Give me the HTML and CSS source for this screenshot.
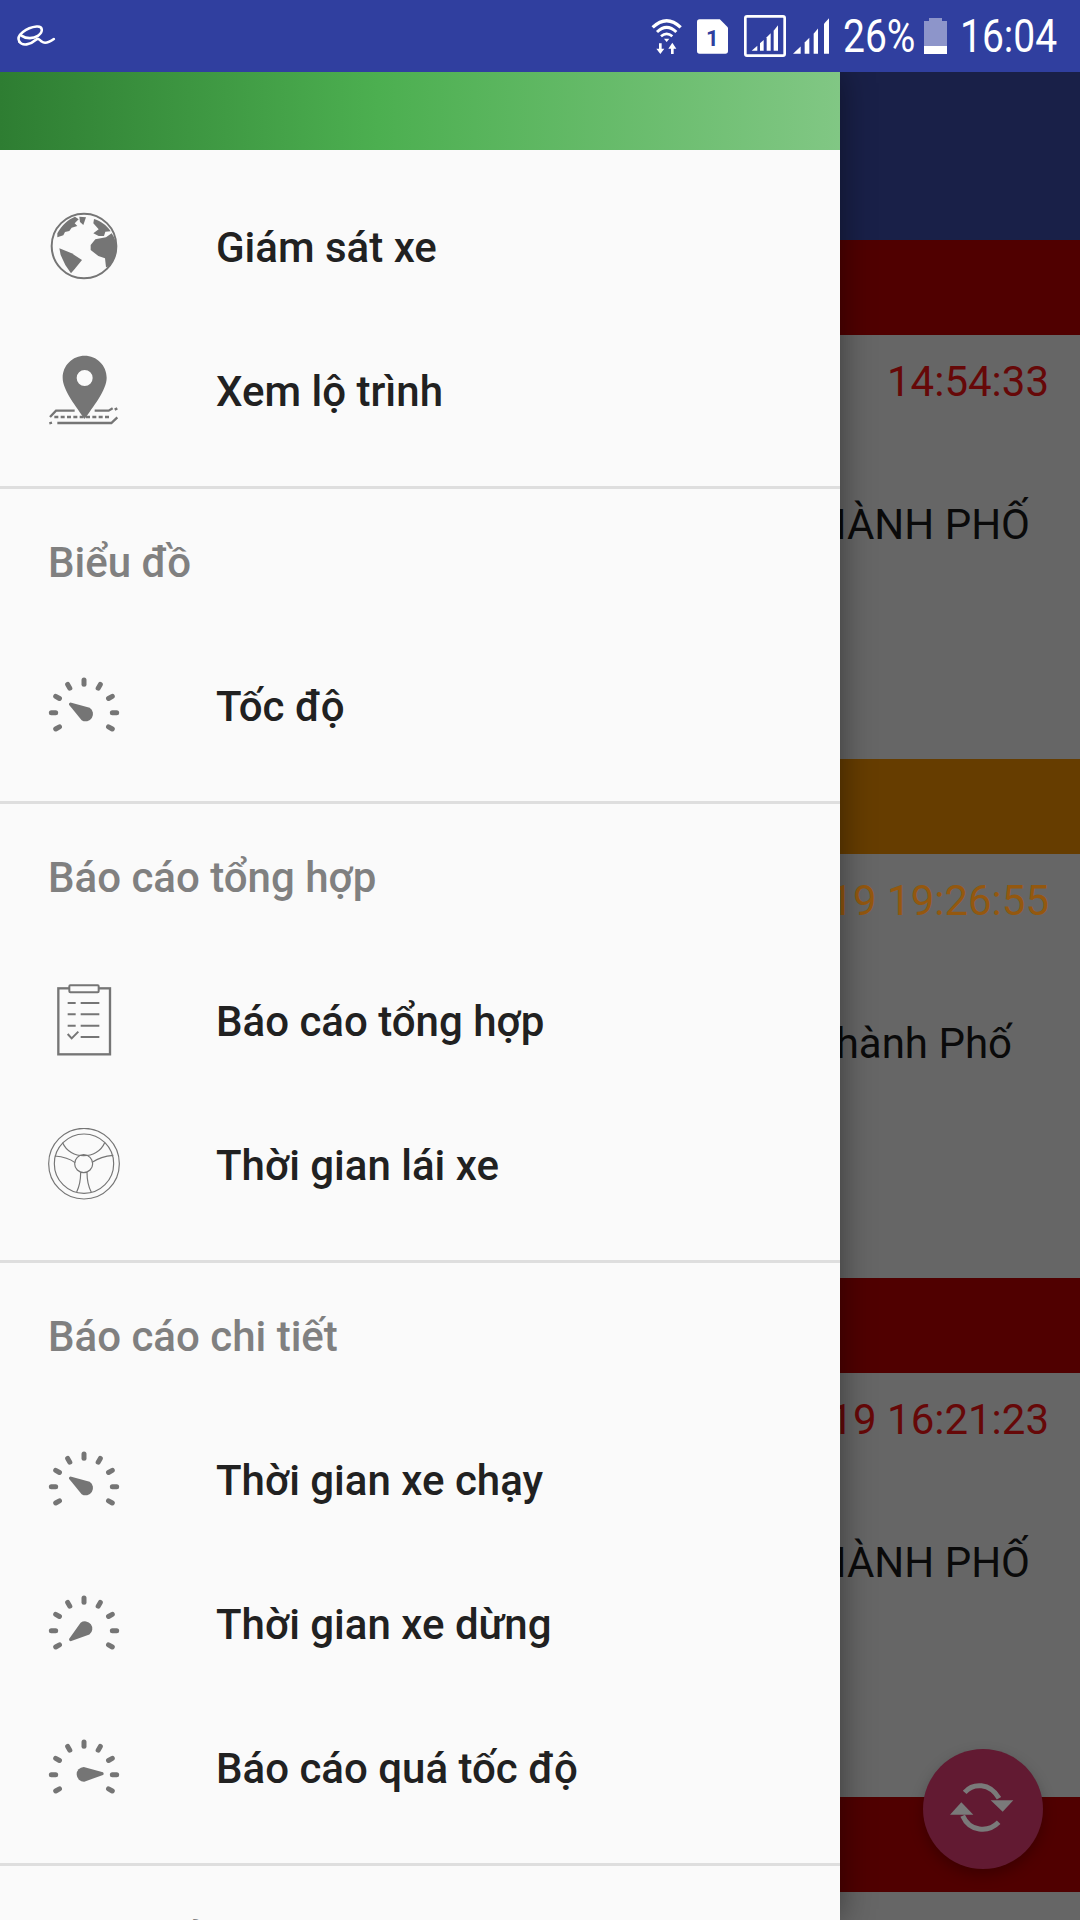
FILE: index.html
```html
<!DOCTYPE html>
<html lang="vi">
<head>
  <meta charset="UTF-8">
  <meta name="viewport" content="width=device-width, initial-scale=1">
  <title>Menu</title>
  <link rel="stylesheet" href="styles.css">
</head>
<body>
<svg class="sprite" aria-hidden="true">
  <defs>
    <g id="gauge-ticks">
      <line x1="0" y1="-85" x2="0" y2="-98"/>
      <line x1="0" y1="-85" x2="0" y2="-98" transform="rotate(30)"/>
      <line x1="0" y1="-85" x2="0" y2="-98" transform="rotate(60)"/>
      <line x1="0" y1="-85" x2="0" y2="-98" transform="rotate(90)"/>
      <line x1="0" y1="-85" x2="0" y2="-98" transform="rotate(120)"/>
      <line x1="0" y1="-85" x2="0" y2="-98" transform="rotate(-30)"/>
      <line x1="0" y1="-85" x2="0" y2="-98" transform="rotate(-60)"/>
      <line x1="0" y1="-85" x2="0" y2="-98" transform="rotate(-90)"/>
      <line x1="0" y1="-85" x2="0" y2="-98" transform="rotate(-120)"/>
    </g>
    <path id="gauge-needle" d="M0-22 L57-4 Q61 0 57 4 L0 22 A22 22 0 0 1 0-22Z"/>
  </defs>
</svg>

<div class="app">
  <div class="statusbar">
    <svg class="st-logo" viewBox="24 25 131 75">
      <path d="M42 80C30 60 66 36 96 33C116 31 118 50 100 62C86 71 64 72 50 62"/>
      <path d="M42 80C52 95 76 90 94 74C100 69 104 72 112 80C122 88 136 82 150 72"/>
    </svg>
    <div class="st-right">
      <svg class="st-wifi" viewBox="36 52 96 108">
        <path class="st-line" d="M41 80Q83 40 125 80" stroke-width="10"/>
        <path class="st-line" d="M54 94Q83 66 112 94" stroke-width="9"/>
        <path class="st-line" d="M66 107Q83 92 100 107" stroke-width="8"/>
        <path d="M75 114H91L83 124Z"/>
        <path d="M60 128H68V144H76L64 160L52 144H60Z"/>
        <path d="M96 160H104V144H112L100 126L88 144H96Z"/>
      </svg>
      <svg class="st-sim" viewBox="170 55 95 105">
        <path d="M178 55H240L265 80V152Q265 160 257 160H178Q170 160 170 152V63Q170 55 178 55Z"/>
        <text x="217" y="137" text-anchor="middle">1</text>
      </svg>
      <svg class="st-frame" viewBox="312 45 126 126">
        <rect class="st-line" x="316" y="49" width="118" height="118" rx="5" stroke-width="8"/>
        <path d="M335 152L352 137V152Z"/>
        <path d="M360 130L371 120V152H360Z"/>
        <path d="M380 112L392 100V152H380Z"/>
        <path d="M401 92L414 76V152H401Z"/>
      </svg>
      <svg class="st-signal" viewBox="460 55 108 107">
        <path d="M460 162L483 140V162Z"/>
        <path d="M495 128L509 114V162H495Z"/>
        <path d="M522 102L535 86V162H522Z"/>
        <path d="M553 72L568 55V162H553Z"/>
      </svg>
      <span class="st-text st-pct">26%</span>
      <div class="st-battery">
        <div class="st-battery-level"></div>
      </div>
      <span class="st-text st-time">16:04</span>
    </div>
  </div>

  <div class="screen">
    <div class="behind">
      <div class="toolbar"></div>

      <div class="band band-red"></div>
      <div class="card-body">
        <div class="card-date date-red">14:54:33</div>
        <div class="card-addr">THÀNH PHỐ</div>
      </div>

      <div class="band band-orange"></div>
      <div class="card-body">
        <div class="card-date date-orange">2019 19:26:55</div>
        <div class="card-addr card-addr-short">Thành Phố</div>
      </div>

      <div class="band band-red"></div>
      <div class="card-body">
        <div class="card-date date-red">2019 16:21:23</div>
        <div class="card-addr">THÀNH PHỐ</div>
      </div>

      <div class="band band-red"></div>
      <div class="card-body"></div>
    </div>

    <div class="fab">
      <svg class="fab-icon" viewBox="0 0 330 360">
        <path class="fab-arc" d="M110 130C135 102 185 100 213 148"/>
        <path d="M188 154H256L224 188Z"/>
        <path class="fab-arc" d="M212 220C180 252 125 248 104 200"/>
        <path d="M66 197H136L100 160Z"/>
      </svg>
    </div>

    <nav class="drawer">
      <div class="drawer-head"></div>

      <div class="group group-first">
        <div class="item">
          <svg class="icon" viewBox="144 60 216 216">
            <circle class="icon-line" cx="252" cy="168" r="97" stroke-width="6"/>
            <path d="M172 130C185 105 205 88 225 80L236 88L224 100L232 108L215 113L208 123L195 126L190 136L172 142Z"/>
            <path d="M238 80L258 82L250 105L240 96Z"/>
            <path d="M282 87C300 92 320 105 332 124L316 125L312 138L296 138L280 130L296 118L280 100Z"/>
            <path d="M286 148L318 142L335 130C350 150 352 175 348 195L330 228L318 232L315 205L295 198L272 180L272 165Z"/>
            <path d="M178 175L215 190L246 210L226 235L213 250L196 225L182 195Z"/>
          </svg>
          <span>Giám sát xe</span>
        </div>
        <div class="item">
          <svg class="icon" viewBox="146 491 216 216">
            <path fill-rule="evenodd" d="M256 496C292 496 322 525 322 562C322 600 280 650 256 686C232 650 190 600 190 562C190 525 220 496 256 496ZM256 539A24 24 0 1 0 256 587A24 24 0 1 0 256 539Z"/>
            <path class="icon-line" stroke-width="7" d="M152 680L170 661H226M286 661H328L340 654"/>
            <path class="icon-line" stroke-width="7" stroke-dasharray="12 7" d="M165 680H330"/>
            <path class="icon-line" stroke-width="7" d="M174 698H336L354 681"/>
            <path class="icon-line" stroke-width="7" d="M150 699L158 697M346 658L354 654"/>
          </svg>
          <span>Xem lộ trình</span>
        </div>
      </div>

      <div class="group">
        <div class="group-title">Biểu đồ</div>
        <div class="item">
          <svg class="icon" viewBox="-108 -131 216 216">
            <use class="gauge-ticks" href="#gauge-ticks"/>
            <use href="#gauge-needle" transform="translate(5 4) rotate(213)"/>
          </svg>
          <span>Tốc độ</span>
        </div>
      </div>

      <div class="group">
        <div class="group-title">Báo cáo tổng hợp</div>
        <div class="item">
          <svg class="icon" viewBox="84 72 216 216">
            <rect class="icon-line" x="115" y="85" width="155" height="198" stroke-width="7"/>
            <rect class="clip" x="148" y="76" width="88" height="21" rx="3" stroke-width="6"/>
            <path class="icon-line" stroke-width="6" d="M143 129H167M182 129H238M143 163H167M182 163H238M143 197H167M182 197H238M182 231H238"/>
            <path class="icon-line" stroke-width="6" d="M143 222L155 235L175 215"/>
          </svg>
          <span>Báo cáo tổng hợp</span>
        </div>
        <div class="item">
          <svg class="icon" viewBox="84 504 216 216">
            <g class="icon-line" stroke-width="3.5">
              <circle cx="192" cy="611" r="106"/>
              <circle cx="192" cy="611" r="89"/>
              <circle cx="191" cy="611" r="27"/>
              <path d="M128 548C150 600 232 600 254 548"/>
              <path d="M104 588C130 590 150 596 165 608"/>
              <path d="M218 606C235 594 258 588 280 586"/>
              <path d="M182 637C182 660 178 680 170 696"/>
              <path d="M201 637C201 660 205 680 214 697"/>
            </g>
          </svg>
          <span>Thời gian lái xe</span>
        </div>
      </div>

      <div class="group">
        <div class="group-title">Báo cáo chi tiết</div>
        <div class="item">
          <svg class="icon" viewBox="-108 -131 216 216">
            <use class="gauge-ticks" href="#gauge-ticks"/>
            <use href="#gauge-needle" transform="translate(5 4) rotate(213)"/>
          </svg>
          <span>Thời gian xe chạy</span>
        </div>
        <div class="item">
          <svg class="icon" viewBox="-108 -131 216 216">
            <use class="gauge-ticks" href="#gauge-ticks"/>
            <use href="#gauge-needle" transform="translate(3 -6) rotate(143)"/>
          </svg>
          <span>Thời gian xe dừng</span>
        </div>
        <div class="item">
          <svg class="icon" viewBox="-108 -131 216 216">
            <use class="gauge-ticks" href="#gauge-ticks"/>
            <use href="#gauge-needle" transform="translate(0 -1) rotate(-2)"/>
          </svg>
          <span>Báo cáo quá tốc độ</span>
        </div>
      </div>

      <div class="group">
        <div class="group-title">Tài khoản</div>
      </div>
    </nav>
  </div>
</div>
</body>
</html>
```

FILE: styles.css
```css
html, body { margin: 0; padding: 0; }
body { width: 1080px; height: 1920px; overflow: hidden; font-family: Roboto, "Noto Sans", sans-serif; background: #666; }
.sprite { display: none; }

.app { display: flex; flex-direction: column; height: 1920px; }

/* status bar */
.statusbar { height: 72px; flex: none; background: #303f9f; display: flex; align-items: center; justify-content: space-between; padding: 0 23px 0 13px; box-sizing: border-box; position: relative; z-index: 3; }
.statusbar svg { display: block; fill: #fff; }
.st-logo { width: 43px; height: 24px; fill: none !important; stroke: #fff; stroke-width: 8; stroke-linecap: round; margin-top: -1px; }
.st-right { display: flex; align-items: center; }
.st-line { fill: none; stroke: #fff; }
.st-wifi { width: 32px; height: 36px; }
.st-sim { width: 31px; height: 35px; margin-left: 14px; }
.st-sim text { fill: #303f9f; font-family: Roboto, sans-serif; font-weight: 700; font-size: 68px; }
.st-frame { width: 42px; height: 42px; margin-left: 16px; }
.st-signal { width: 36px; height: 36px; margin-left: 7px; }
.st-text { display: block; color: #fff; font-size: 47px; line-height: 72px; white-space: nowrap; transform-origin: left center; transform: scaleX(0.83); }
.st-pct { width: 71px; margin-left: 14px; }
.st-time { width: 97px; margin-left: 13px; }
.st-battery { width: 23px; height: 33px; margin: 3px 0 0 10px; background: rgba(255,255,255,0.45); position: relative; display: flex; align-items: flex-end; }
.st-battery:before { content: ""; position: absolute; left: 5px; right: 5px; top: -3px; height: 3px; background: rgba(255,255,255,0.45); }
.st-battery-level { width: 100%; height: 8px; background: #fff; }

/* dimmed screen behind the drawer */
.screen { flex: 1; position: relative; overflow: hidden; }
.toolbar { height: 168px; background: #192048; }
.band { height: 95px; }
.band-red { background: #500000; }
.band-orange { background: #663d00; }
.card-body { height: 424px; background: #666; padding-top: 19px; box-sizing: border-box; }
.card-date { font-size: 42px; line-height: 56px; text-align: right; padding-right: 31px; }
.date-red { color: #660808; }
.date-orange { color: #94580f; }
.card-addr { font-size: 42px; line-height: 56px; text-align: right; padding-right: 50px; margin-top: 87px; color: #0a0a0a; }
.card-addr-short { padding-right: 68px; }

.fab { position: absolute; left: 923px; top: 1677px; width: 120px; height: 120px; border-radius: 50%; background: #621a32; box-shadow: 0 6px 14px rgba(0,0,0,0.25); display: flex; align-items: center; justify-content: center; }
.fab-icon { width: 110px; height: 120px; fill: #7a7a7a; }
.fab-arc { fill: none; stroke: #7a7a7a; stroke-width: 15; }

/* drawer */
.drawer { position: absolute; left: 0; top: 0; bottom: 0; width: 840px; background: #fafafa; box-shadow: 0 0 32px rgba(0,0,0,0.45); overflow: hidden; }
.drawer-head { height: 78px; background: linear-gradient(90deg, #2e7d32 0%, #4caf50 45%, #81c784 100%); }
.group { border-bottom: 3px solid #dedede; padding-bottom: 24px; }
.group-first { padding-top: 24px; }
.group-title { height: 144px; display: flex; align-items: center; padding: 2px 0 0 48px; box-sizing: border-box; font-size: 42px; font-weight: 500; color: #808080; white-space: nowrap; }
.item { height: 144px; display: flex; align-items: center; padding-left: 48px; gap: 96px; font-size: 42px; font-weight: 500; color: #212121; white-space: nowrap; }
.item span { padding-top: 2px; }
.icon { width: 72px; height: 72px; flex: none; fill: #757575; }
.icon-line { fill: none; stroke: #757575; }
.clip { fill: #fafafa; stroke: #757575; }
.gauge-ticks { fill: none; stroke: #757575; stroke-width: 15; stroke-linecap: round; }
```
